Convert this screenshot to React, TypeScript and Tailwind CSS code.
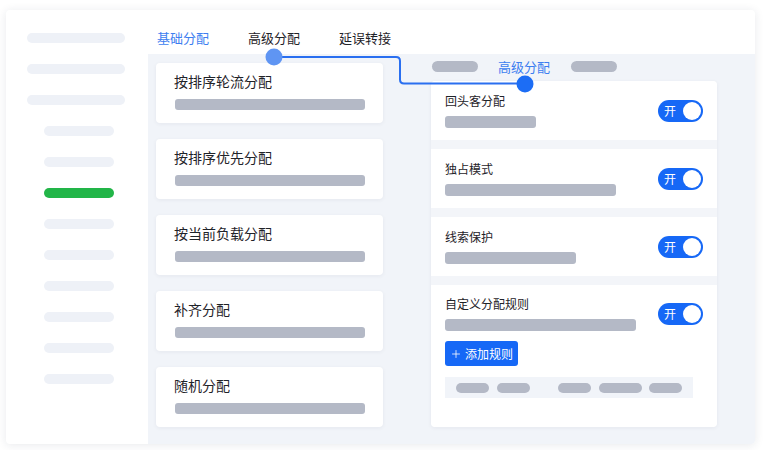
import { Plus } from 'lucide-react';

const cn = "font-['Noto_Sans_CJK_SC','Noto_Sans',sans-serif]";

const leftCards = ['按排序轮流分配', '按排序优先分配', '按当前负载分配', '补齐分配', '随机分配'];

const sections = [
  { title: '回头客分配', bar: 'w-[91px]' },
  { title: '独占模式', bar: 'w-[171px]' },
  { title: '线索保护', bar: 'w-[131px]' },
];

const Toggle = () => (
  <div className="flex h-[22px] w-[45px] shrink-0 items-center justify-between rounded-full bg-[#1668f6] pl-[6px] pr-[2px]">
    <span className={`${cn} text-[12px] leading-none text-white`}>开</span>
    <span className="h-[18px] w-[18px] rounded-full bg-white" />
  </div>
);

const Sidebar = () => (
  <div className="flex w-[142px] shrink-0 flex-col gap-[21px] pt-[23px]">
    {[0, 1, 2].map((i) => (
      <div key={i} className="ml-[21px] h-[10px] w-[98px] rounded-full bg-[#eef1f7]" />
    ))}
    {[0, 1, 2, 3, 4, 5, 6, 7, 8].map((i) => (
      <div
        key={i}
        className={`ml-[38px] h-[10px] w-[70px] rounded-full ${i === 2 ? 'bg-[#22b548]' : 'bg-[#eef1f7]'}`}
      />
    ))}
  </div>
);

const Connector = () => (
  <svg className="pointer-events-none absolute left-0 top-0" width="750" height="120">
    <path
      d="M268 47 H390 Q394 47 394 51 V69.5 Q394 73.5 398 73.5 H519"
      fill="none"
      stroke="#2a6ff0"
      strokeWidth="2"
    />
    <circle cx="268" cy="47" r="8.5" fill="#5f95f3" />
    <circle cx="519" cy="74" r="8.5" fill="#1c6df5" />
  </svg>
);

export default function App() {
  return (
    <div className="h-[450px] w-[764px] bg-white pl-[6px] pt-[10px]">
      <div className="relative flex h-[434px] w-[749px] overflow-hidden rounded-[4px] bg-white shadow-[0_1px_10px_rgba(30,40,70,0.10)]">
        <Sidebar />
        <div className="flex flex-1 flex-col">
          <div className={`${cn} flex h-[44px] shrink-0 gap-[39px] pl-[9px] pt-[19px] text-[13px] leading-[18px] text-[#1f2329]`}>
            <span className="text-[#3d7ef0]">基础分配</span>
            <span>高级分配</span>
            <span>延误转接</span>
          </div>
          <div className="flex flex-1 bg-[#f1f4f9] pl-[8px]">
            <div className="flex w-[227px] flex-col gap-[16px] pt-[9px]">
              {leftCards.map((t) => (
                <div
                  key={t}
                  className="h-[60px] rounded-[4px] bg-white px-[18px] pt-[8px] shadow-[0_1px_4px_rgba(30,40,70,0.06)]"
                >
                  <div className={`${cn} text-[14px] leading-[20px] text-[#1f2329]`}>{t}</div>
                  <div className="ml-px mt-[8px] h-[11px] w-[190px] rounded-[3px] bg-[#b4b9c6]" />
                </div>
              ))}
            </div>
            <div className="ml-[48px] flex w-[286px] flex-col pt-[6px]">
              <div className="flex h-[13px] items-center pl-px">
                <div className="h-[11px] w-[46px] rounded-full bg-[#b4b9c6]" />
                <span className={`${cn} ml-[20px] text-[13px] leading-[13px] text-[#3d7ef0]`}>高级分配</span>
                <div className="ml-[21px] h-[11px] w-[46px] rounded-full bg-[#b4b9c6]" />
              </div>
              <div className="mt-[8px] flex h-[346px] flex-col gap-[9px] overflow-hidden rounded-[4px] bg-[#f3f5f9] shadow-[0_1px_4px_rgba(30,40,70,0.06)]">
                {sections.map((s) => (
                  <div key={s.title} className="flex h-[59px] shrink-0 items-center bg-white pl-[14px] pr-[14px]">
                    <div className="flex-1">
                      <div className={`${cn} text-[12px] leading-[16px] text-[#1f2329]`}>{s.title}</div>
                      <div className={`mt-[7px] h-[12px] rounded-[3px] bg-[#b4b9c6] ${s.bar}`} />
                    </div>
                    <Toggle />
                  </div>
                ))}
                <div className="flex-1 bg-white pl-[14px] pr-[14px] pt-[11px]">
                  <div className="flex items-center">
                    <div className="flex-1">
                      <div className={`${cn} text-[12px] leading-[16px] text-[#1f2329]`}>自定义分配规则</div>
                      <div className="mt-[7px] h-[12px] w-[191px] rounded-[3px] bg-[#b4b9c6]" />
                    </div>
                    <Toggle />
                  </div>
                  <button
                    className={`${cn} mt-[10px] flex h-[25px] w-[73px] items-center justify-center gap-[3px] rounded-[3px] bg-[#1668f6] text-[12px] leading-none text-white`}
                  >
                    <Plus size={12} strokeWidth={1.6} />
                    添加规则
                  </button>
                  <div className="mt-[11px] flex h-[21px] w-[248px] items-center bg-[#f1f4f9] pl-[11px]">
                    <div className="h-[10px] w-[33px] rounded-full bg-[#b4b9c6]" />
                    <div className="ml-[8px] h-[10px] w-[33px] rounded-full bg-[#b4b9c6]" />
                    <div className="ml-[28px] h-[10px] w-[33px] rounded-full bg-[#b4b9c6]" />
                    <div className="ml-[8px] h-[10px] w-[43px] rounded-full bg-[#b4b9c6]" />
                    <div className="ml-[7px] h-[10px] w-[33px] rounded-full bg-[#b4b9c6]" />
                  </div>
                </div>
              </div>
            </div>
          </div>
        </div>
        <Connector />
      </div>
    </div>
  );
}
